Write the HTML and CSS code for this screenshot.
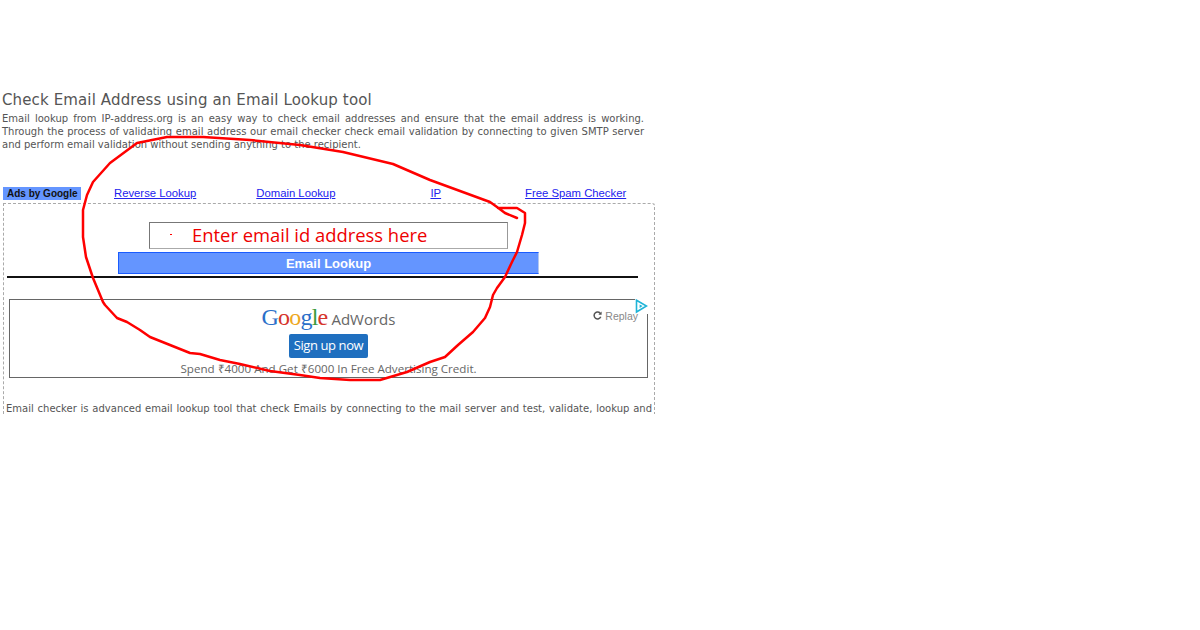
FILE: index.html
```html
<!DOCTYPE html>
<html lang="en">
<head>
    <meta charset="UTF-8">
    <title>Check Email Address</title>
    <link rel="stylesheet" href="styles.css">
</head>
<body>
    <main class="page">
        <h1 class="title">Check Email Address using an Email Lookup tool</h1>
        <p class="intro">Email lookup from IP-address.org is an easy way to check email addresses and ensure that the email address is working. Through the process of validating email address our email checker check email validation by connecting to given SMTP server and perform email validation without sending anything to the recipient.</p>

        <nav class="links">
            <span class="ads-label">Ads by Google</span>
            <a href="#" class="link-reverse">Reverse Lookup</a>
            <a href="#" class="link-domain">Domain Lookup</a>
            <a href="#" class="link-ip">IP</a>
            <a href="#" class="link-spam">Free Spam Checker</a>
        </nav>

        <section class="panel">
            <div class="email-input">
                <span class="dot"></span>
                <span class="placeholder">Enter email id address here</span>
            </div>
            <button class="lookup-btn">Email Lookup</button>
            <div class="rule"></div>

            <div class="ad">
                <div class="ad-logo">
                    <span class="google"><span class="g-blue">G</span><span class="g-red">o</span><span class="g-yellow">o</span><span class="g-blue">g</span><span class="g-green">l</span><span class="g-red">e</span></span>
                    <span class="adwords">AdWords</span>
                </div>
                <div class="signup">Sign up now</div>
                <div class="ad-text">Spend ₹4000 And Get ₹6000 In Free Advertising Credit.</div>
                <span class="replay">
                    <svg width="9" height="9" viewBox="0 0 10 10"><path d="M8.3 3A3.8 3.8 0 1 0 8.6 6.4" fill="none" stroke="#555" stroke-width="1.7"/><path d="M9.6 0.6V4.2H6z" fill="#555"/></svg>
                    Replay
                </span>
                <svg class="adchoices" width="13" height="15" viewBox="0 0 13 15"><path d="M1.5 1.2L11.5 7 1.5 13z" fill="#fff" stroke="#1fb4d8" stroke-width="1.6"/><path d="M4.6 5.4L7.6 7.1 4.6 8.9z" fill="#1fb4d8"/></svg>
            </div>

            <p class="more">Email checker is advanced email lookup tool that check Emails by connecting to the mail server and test, validate, lookup and</p>
        </section>

        <svg class="scribble" width="1200" height="630" viewBox="0 0 1200 630">
            <path d="M517 218L505 213L497 207L490 202L430 180L393 164L343 152L300 145L250 140L203 137L167 137L137 143L110 163L93 182L87 195L83 210L83 237L86 257L93 278L103 302L105 305L117 318L127 322L140 330L150 337L170 345L190 353L200 354L220 360L240 364L270 371L300 375L320 378L350 380L380 380L407 372L430 362L445 357L458 345L473 332L485 318L490 307L493 295L497 288L505 277L512 262L517 252L522 235L525 223L525 213L517 208L498 208"/>
        </svg>
    </main>
</body>
</html>
```

FILE: styles.css
```css
*{
    margin: 0;
    padding: 0;
    box-sizing: border-box;
}

body{
    background-color: #fff;
    font-family: "DejaVu Sans", Verdana, sans-serif;
    color: #555;
}

.page{
    width: 1200px;
    height: 630px;
    padding: 91px 0 0 2px;
    overflow: hidden;
}

.title{
    font-size: 15px;
    font-weight: normal;
    line-height: 18px;
    letter-spacing: 0.13px;
    color: #555;
}

.intro{
    width: 642px;
    margin-top: 3px;
    font-size: 10px;
    line-height: 13px;
    text-align: justify;
}

/* links above the box */
.links{
    display: flex;
    align-items: center;
    height: 14px;
    margin-top: 35px;
    margin-left: 1px;
    font-family: "Liberation Sans", Arial, sans-serif;
    font-size: 11.3px;
}

.links a{
    color: #22e;
}

.ads-label{
    width: 78px;
    height: 13px;
    line-height: 13px;
    padding-left: 4px;
    background-color: #6495ff;
    color: #111;
    font-size: 10px;
    font-weight: bold;
    white-space: nowrap;
}

.link-reverse{
    margin-left: 33px;
}

.link-domain{
    margin-left: 60px;
}

.link-ip{
    margin-left: 95px;
}

.link-spam{
    margin-left: 84px;
}

.panel{
    position: relative;
    width: 652px;
    height: 211px;
    margin-top: 3px;
    margin-left: 1px;
    border: 1px dashed #aaa;
    border-bottom: 0;
    border-top-right-radius: 3px;
    overflow: hidden;
}

.email-input{
    display: flex;
    align-items: center;
    width: 359px;
    height: 27px;
    margin: 18px 0 0 145px;
    padding-bottom: 2px;
    border: 1px solid #777;
    border-bottom-color: #aaa;
    border-right-color: #999;
}

.dot{
    width: 2px;
    height: 1px;
    margin-left: 20px;
    background-color: #f00;
}

.placeholder{
    margin-left: 20px;
    font-family: "Open Sans", sans-serif;
    font-size: 18.4px;
    color: #e00;
}

.lookup-btn{
    display: block;
    width: 421px;
    height: 22px;
    margin: 3px 0 0 114px;
    border: 0;
    border-top: 1px solid #1a5cff;
    border-left: 1px solid #1a5cff;
    border-bottom: 1px solid #1a5cff;
    border-right: 1px solid #b4c8f0;
    background-color: #6495ff;
    color: #fff;
    font-family: "Liberation Sans", Arial, sans-serif;
    font-size: 13px;
    font-weight: bold;
}

.rule{
    width: 631px;
    height: 2px;
    margin: 2px 0 0 3px;
    background-color: #111;
}

.ad{
    position: relative;
    width: 639px;
    height: 79px;
    margin: 21px 0 0 5px;
    border: 1px solid #666;
    text-align: center;
}

.ad-logo{
    display: flex;
    justify-content: center;
    align-items: baseline;
    height: 34px;
    padding-top: 4px;
}

.google{
    font-family: "Liberation Serif", serif;
    font-size: 24px;
    letter-spacing: -0.8px;
}

.g-blue{ color: #2a6fc9; }
.g-red{ color: #d6352b; }
.g-yellow{ color: #eea81f; }
.g-green{ color: #3a9a3a; }

.adwords{
    margin-left: 4px;
    font-family: "Open Sans", sans-serif;
    font-size: 15px;
    color: #666;
}

.signup{
    width: 79px;
    height: 24px;
    margin-left: 279px;
    line-height: 23px;
    border-radius: 2px;
    background-color: #1f6fbf;
    color: #fff;
    font-family: "Open Sans", sans-serif;
    font-size: 13px;
    letter-spacing: -0.4px;
}

.ad-text{
    margin-top: 2px;
    font-family: "Open Sans", sans-serif;
    font-size: 11.6px;
    line-height: 17px;
    color: #666;
}

.replay{
    position: absolute;
    top: 10px;
    right: 9px;
    font-family: "Liberation Sans", Arial, sans-serif;
    font-size: 10.5px;
    color: #888;
}

.adchoices{
    position: absolute;
    top: -1px;
    right: -1px;
    background-color: #fff;
}

.more{
    width: 646px;
    margin: 24px 0 0 2px;
    font-size: 10px;
    line-height: 13px;
    text-align: justify;
    text-align-last: justify;
}

.scribble{
    position: absolute;
    top: 0;
    left: 0;
}

.scribble path{
    fill: none;
    stroke: #f00;
    stroke-width: 2.5;
    stroke-linejoin: round;
    stroke-linecap: round;
}
```
